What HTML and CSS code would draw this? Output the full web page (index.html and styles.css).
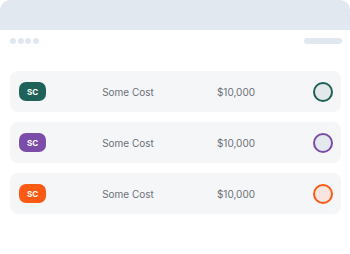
FILE: index.html
```html
<!DOCTYPE html>
<html lang="en">
<head>
  <meta charset="UTF-8" />
  <meta name="viewport" content="width=device-width, initial-scale=1.0"/>
  <title>Costs</title>
  <link rel="stylesheet" href="styles.css">
</head>
<body>
  <div class="window">
    <div class="titlebar"></div>

    <div class="toolbar">
      <div class="dots">
        <span></span><span></span><span></span><span></span>
      </div>
      <div class="pill"></div>
    </div>

    <div class="list">
      <div class="row">
        <div class="badge teal">SC</div>
        <div class="name">Some Cost</div>
        <div class="amount">$10,000</div>
        <div class="check teal"></div>
      </div>

      <div class="row">
        <div class="badge purple">SC</div>
        <div class="name">Some Cost</div>
        <div class="amount">$10,000</div>
        <div class="check purple"></div>
      </div>

      <div class="row">
        <div class="badge orange">SC</div>
        <div class="name">Some Cost</div>
        <div class="amount">$10,000</div>
        <div class="check orange"></div>
      </div>
    </div>
  </div>
</body>
</html>
```

FILE: styles.css
```css
body {
  margin: 0;
  font-family: Inter, 'Noto Sans', sans-serif;
  background: #ffffff;
}

.window {
  width: 350px;
  height: 254px;
  background: #ffffff;
}

.titlebar {
  height: 30px;
  background: #e2e8f0;
  border-radius: 10px 10px 0 0;
}

.toolbar {
  display: flex;
  justify-content: space-between;
  align-items: center;
  padding: 8px 8px 0 10px;
  height: 6px;
}

.dots {
  display: flex;
  gap: 1.5px;
}

.dots span {
  width: 6px;
  height: 6px;
  border-radius: 50%;
  background: #e2e8f0;
}

.pill {
  width: 38px;
  height: 6px;
  border-radius: 3px;
  background: #e2e8f0;
}

.list {
  display: flex;
  flex-direction: column;
  gap: 10px;
  padding: 27px 9px 0 10px;
}

.row {
  display: grid;
  grid-template-columns: 27px 164px 52px 1fr;
  align-items: center;
  height: 41px;
  padding: 0 8px 0 9px;
  background: #f5f6f8;
  border-radius: 8px;
}

.badge {
  height: 19px;
  border-radius: 7px;
  color: #ffffff;
  font-size: 8px;
  font-weight: 700;
  display: flex;
  align-items: center;
  justify-content: center;
}

.badge.teal { background: #1f6259; }
.badge.purple { background: #7b4ca8; }
.badge.orange { background: #fb5a14; }

.name,
.amount {
  text-align: center;
  font-size: 10px;
  color: #6b7078;
}

.check {
  justify-self: end;
  width: 16px;
  height: 16px;
  border-radius: 50%;
  border: 2px solid;
}

.check.teal { border-color: #1f5f57; background: #e3e9ea; }
.check.purple { border-color: #7b4ca8; background: #e3e9ec; }
.check.orange { border-color: #fb5a14; background: #f9e4de; }
```
